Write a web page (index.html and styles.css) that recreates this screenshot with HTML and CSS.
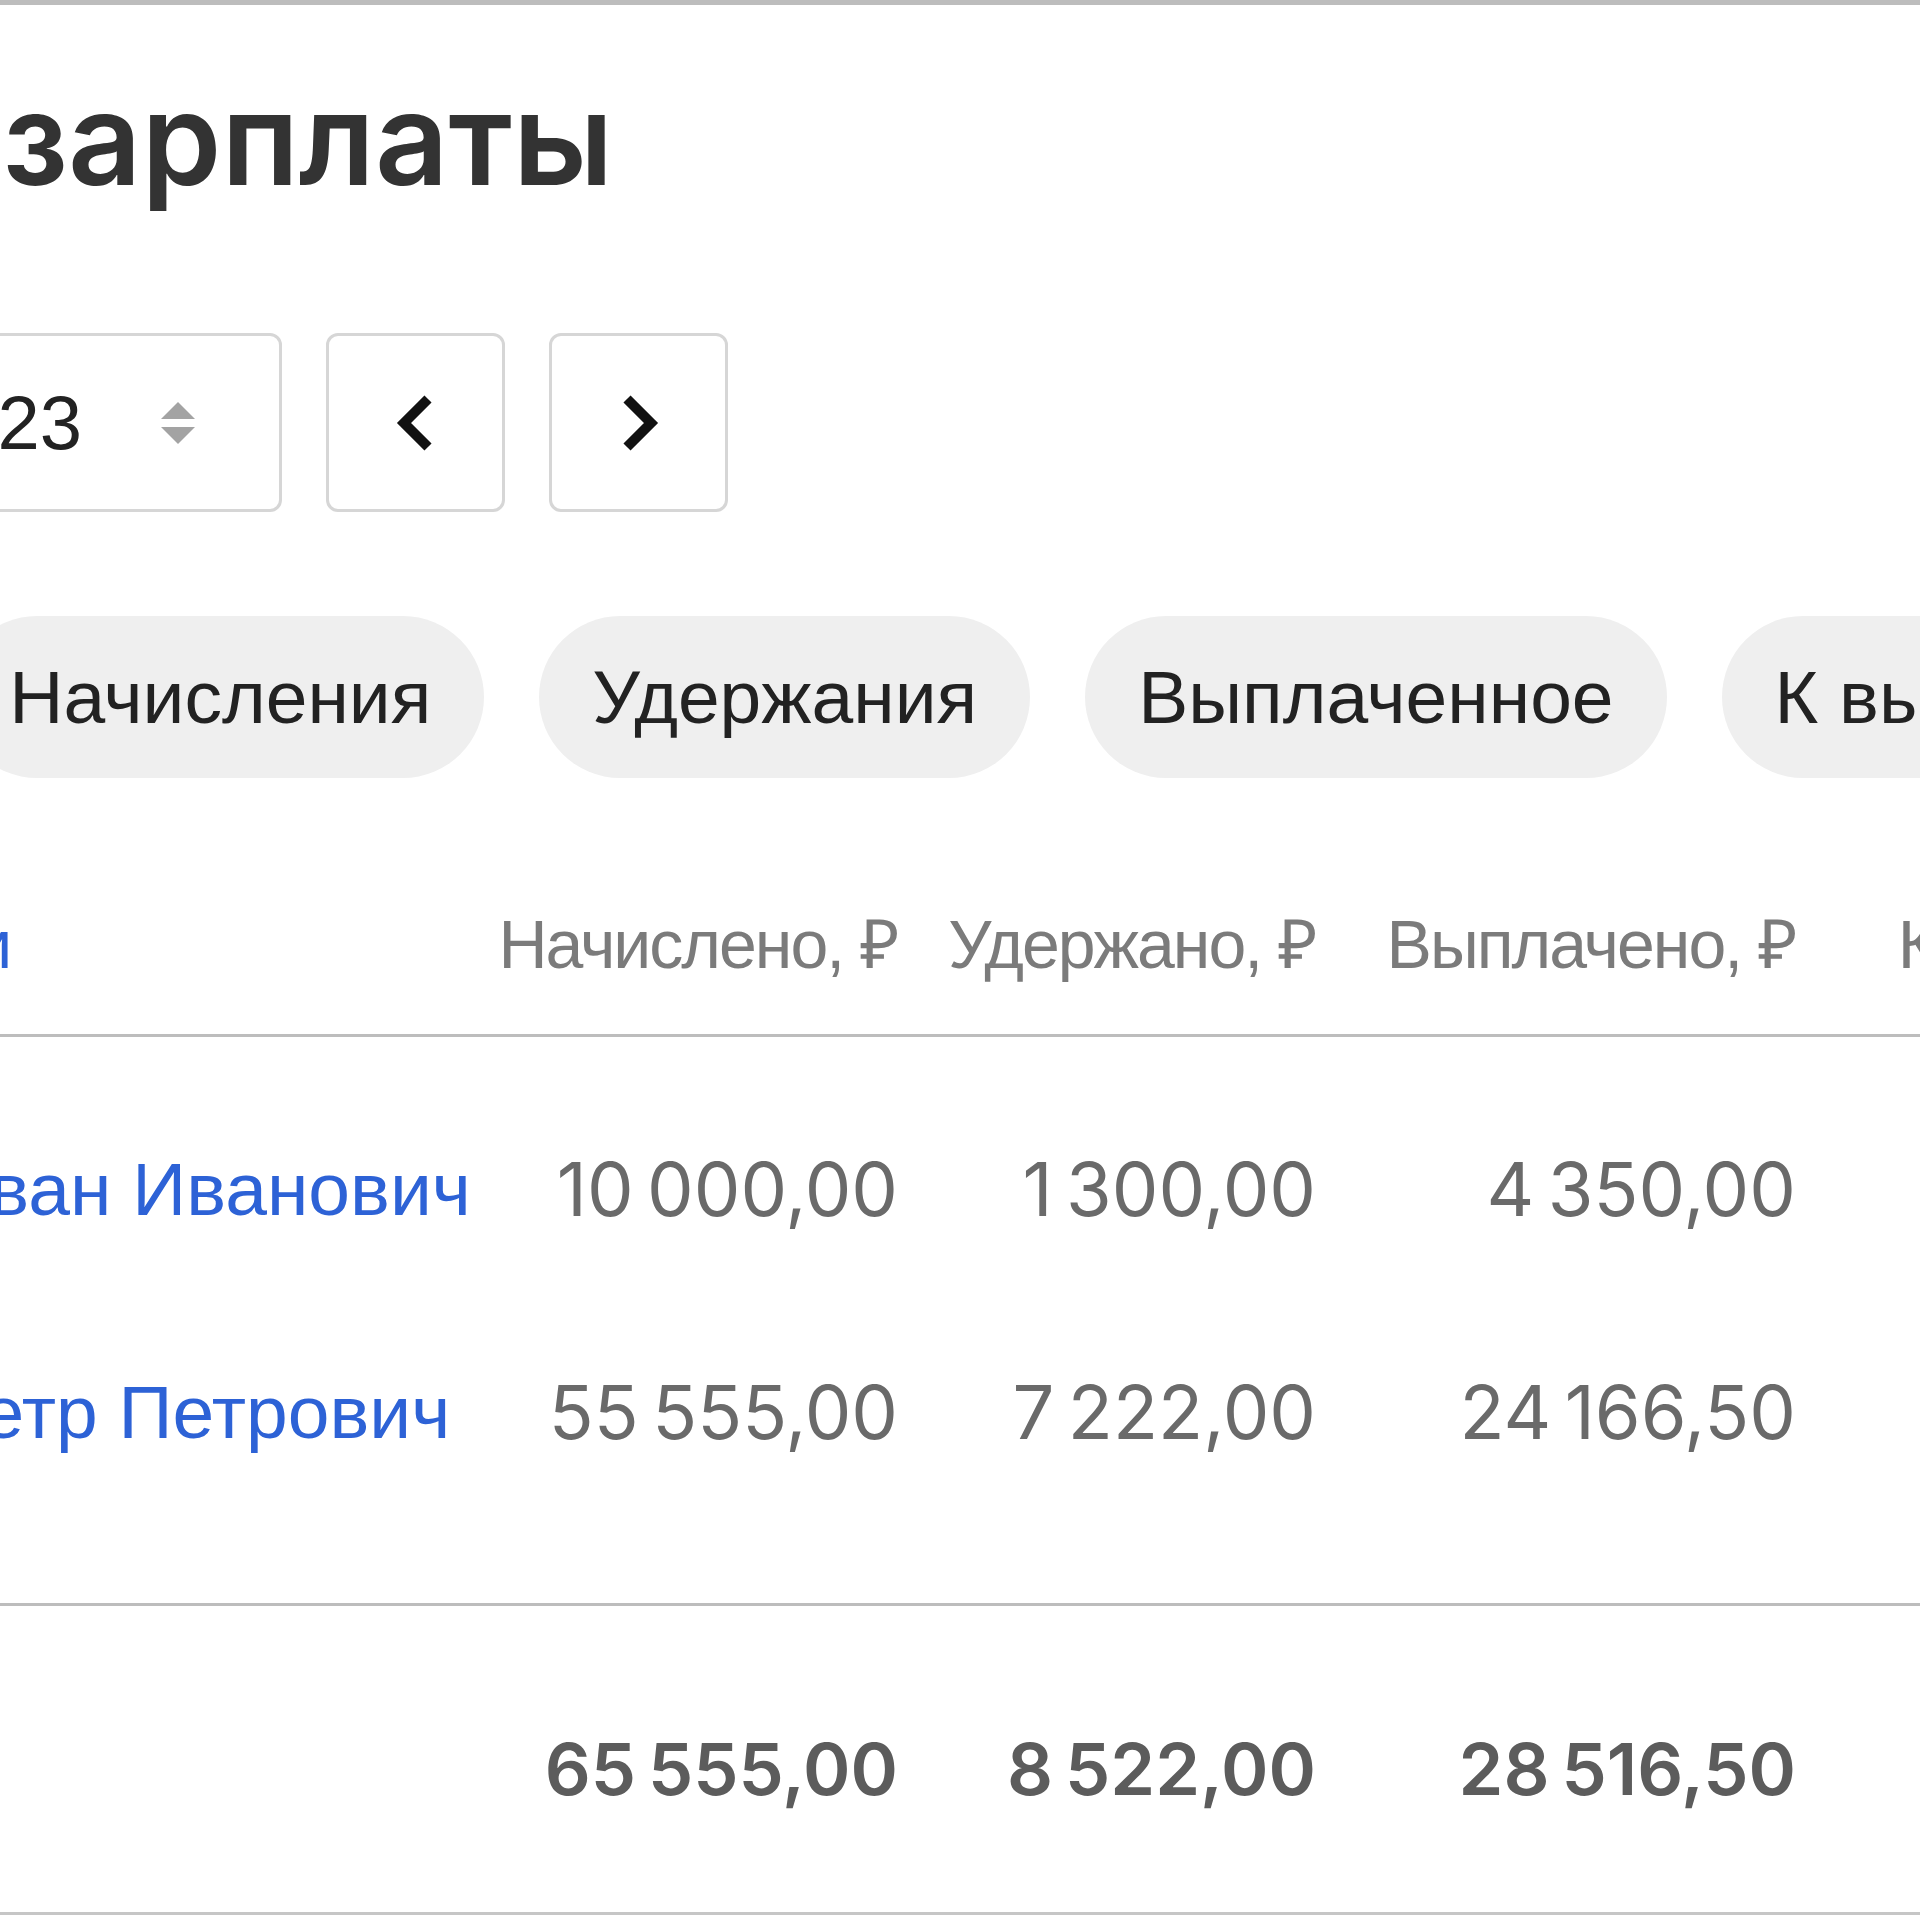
FILE: index.html
```html
<!DOCTYPE html>
<html lang="ru">
<head>
  <meta charset="UTF-8">
  <meta name="viewport" content="width=device-width, initial-scale=1.0">
  <title>Учёт зарплаты</title>
  <link rel="stylesheet" href="styles.css">
</head>
<body>
  <div class="page">
    <h1 class="title">Учёт зарплаты</h1>

    <div class="period">
      <select class="month">
        <option>Дек</option>
      </select>
      <div class="year-field">
        <input type="text" class="year-input" value="2023">
        <svg class="spinner" viewBox="0 0 38 46" width="38" height="46">
          <polygon points="2,19 19,2 36,19" />
          <polygon points="2,27 36,27 19,44" />
        </svg>
      </div>
      <button class="nav-btn" title="Предыдущий месяц">
        <svg viewBox="0 0 46 58" width="46" height="58">
          <polyline points="35,5 11,29 35,53" />
        </svg>
      </button>
      <button class="nav-btn" title="Следующий месяц">
        <svg viewBox="0 0 46 58" width="46" height="58">
          <polyline points="11,5 35,29 11,53" />
        </svg>
      </button>
    </div>

    <div class="tabs">
      <button class="tab">Все</button>
      <button class="tab">Начисления</button>
      <button class="tab">Удержания</button>
      <button class="tab">Выплаченное</button>
      <button class="tab">К выплате</button>
    </div>

    <table class="payroll">
      <colgroup>
        <col class="col-name">
        <col class="col-accrued">
        <col class="col-held">
        <col class="col-paid">
        <col class="col-topay">
      </colgroup>
      <thead>
        <tr>
          <th class="name-head"><a href="#">Сотрудники</a></th>
          <th>Начислено, ₽</th>
          <th>Удержано, ₽</th>
          <th>Выплачено, ₽</th>
          <th>К выплате, ₽</th>
        </tr>
      </thead>
      <tbody>
        <tr>
          <td class="name"><a href="#">Иванов Иван Иванович</a></td>
          <td class="num">10&#8239;000,00</td>
          <td class="num">1&#8239;300,00</td>
          <td class="num">4&#8239;350,00</td>
          <td class="num">4&#8239;350,00</td>
        </tr>
        <tr>
          <td class="name"><a href="#">Петров Петр Петрович</a></td>
          <td class="num">55&#8239;555,00</td>
          <td class="num">7&#8239;222,00</td>
          <td class="num">24&#8239;166,50</td>
          <td class="num">24&#8239;166,50</td>
        </tr>
      </tbody>
      <tfoot>
        <tr>
          <td class="name">Итого</td>
          <td class="num total">65&#8239;555,00</td>
          <td class="num total">8&#8239;522,00</td>
          <td class="num total">28&#8239;516,50</td>
          <td class="num total">28&#8239;516,50</td>
        </tr>
      </tfoot>
    </table>
  </div>
</body>
</html>
```

FILE: styles.css
```css
html, body {
  overflow: hidden;
}

body {
  font-family: "Liberation Sans", Arial, sans-serif;
  margin: 0;
  padding: 0;
  background-color: #fff;
  color: #222;
  border-top: 5px solid #bdbdbd;
}

.page {
  margin-left: -343px;
  width: 2700px;
}

.title {
  font-family: Inter, "Liberation Sans", sans-serif;
  font-size: 128px;
  font-weight: 600;
  line-height: 128px;
  color: #333;
  margin: 70px 0 0 24px;
  white-space: nowrap;
}

.period {
  display: flex;
  align-items: center;
  gap: 44px;
  margin-top: 130px;
  height: 179px;
}

.month,
.year-field,
.nav-btn {
  box-sizing: border-box;
  height: 179px;
  border: 3px solid #d6d6d6;
  border-radius: 12px;
  background-color: #fff;
}

.month {
  width: 185px;
  font: 72px "Liberation Sans", sans-serif;
}

.year-field {
  width: 396px;
  display: flex;
  align-items: center;
  padding: 0 82px 0 24px;
}

.year-input {
  flex: 1;
  min-width: 0;
  border: none;
  outline: none;
  padding: 0;
  font: 76px "Liberation Sans", sans-serif;
  color: #222;
  background: transparent;
}

.spinner polygon {
  fill: #a3a3a3;
}

.nav-btn {
  width: 179px;
  padding: 0;
  display: flex;
  align-items: center;
  justify-content: center;
  cursor: pointer;
}

.nav-btn polyline {
  fill: none;
  stroke: #111;
  stroke-width: 10;
}

.tabs {
  display: flex;
  gap: 55px;
  margin-top: 104px;
  padding-left: 9px;
  white-space: nowrap;
}

.tab {
  height: 162px;
  padding: 0 53px;
  border: none;
  border-radius: 81px;
  background-color: #efefef;
  font: 75px "Liberation Sans", sans-serif;
  color: #222;
  cursor: pointer;
}

.payroll {
  margin-top: 62px;
  table-layout: fixed;
  width: 2619px;
  border-collapse: collapse;
  border-bottom: 3px solid #c6c6c6;
}

.col-name { width: 821px; }
.col-accrued { width: 420px; }
.col-held { width: 418px; }
.col-paid { width: 480px; }
.col-topay { width: 480px; }

.payroll th {
  font-size: 68px;
  font-weight: normal;
  letter-spacing: -2px;
  line-height: 80px;
  color: #7b7b7b;
  text-align: right;
  padding: 64px 0 50px;
  border-bottom: 3px solid #bdbdbd;
  white-space: nowrap;
}

.payroll th.name-head {
  text-align: left;
  padding-left: 5px;
}

.payroll a {
  color: #2d62d6;
  text-decoration: none;
}

.payroll td {
  line-height: 80px;
  padding: 72px 0 71px;
  white-space: nowrap;
}

.payroll tbody tr:first-child td {
  padding-top: 112px;
}

.payroll tbody tr:last-child td {
  padding-bottom: 151px;
}

.payroll td.name {
  font-size: 75px;
}

.payroll td.num {
  font-family: Inter, "Liberation Sans", sans-serif;
  font-size: 74px;
  text-align: right;
  color: #6a6a6a;
}

.payroll tfoot td {
  border-top: 3px solid #bdbdbd;
  padding: 123px 0 103px;
}

.payroll td.total {
  font-weight: 600;
  font-size: 72px;
  letter-spacing: -3px;
  color: #5c5c5c;
}
```
